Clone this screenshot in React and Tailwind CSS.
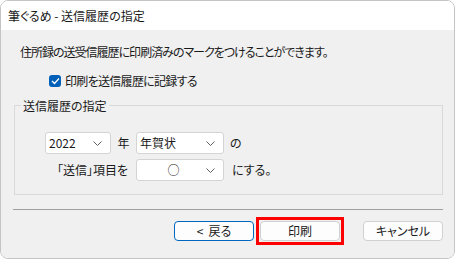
import React from "react";

function Chevron() {
  return (
    <svg width="9" height="5" viewBox="0 0 9 5" className="shrink-0">
      <polyline points="0.5,0.5 4.5,4.5 8.5,0.5" fill="none" stroke="#606060" strokeWidth="1" />
    </svg>
  );
}

function Select({ value, width, center }) {
  return (
    <div
      className="h-[22px] flex items-center bg-white border border-[#d4d4d4] rounded-[3px] pr-[8px]"
      style={{ width }}
    >
      <span className={center ? "flex-1 text-center pl-[4px]" : "flex-1 pl-[3px]"}>{value}</span>
      <Chevron />
    </div>
  );
}

function Button({ children, primary }) {
  return (
    <div
      className={
        "w-[80px] h-[20px] flex items-center justify-center bg-[#fdfdfd] rounded-[4px] " +
        (primary ? "border border-[#0067c0]" : "border border-[#d0d0d0]")
      }
    >
      {children}
    </div>
  );
}

export default function App() {
  return (
    <div className="w-[455px] h-[259px] flex flex-col border border-[#c4c4c4] rounded-[8px] overflow-hidden text-[12px] leading-[16px] text-[#1a1a1a] font-['Noto_Sans_CJK_JP','Noto_Sans',sans-serif] [font-feature-settings:'palt']">
      {/* タイトルバー */}
      <div className="h-[29px] shrink-0 bg-white flex items-center pl-[7px]">
        筆ぐるめ - 送信履歴の指定
      </div>

      <div className="flex-1 bg-[#f0f0f0] flex flex-col">
        <p className="mt-[14px] ml-[19px] tracking-[-1px]">
          住所録の送受信履歴に印刷済みのマークをつけることができます。
        </p>

        <div className="mt-[14px] ml-[48px] flex items-center h-[14px]">
          <div className="w-[12px] h-[12px] rounded-[3px] bg-[#005fb8] flex items-center justify-center">
            <svg width="9" height="8" viewBox="0 0 9 8">
              <polyline points="1,4 3.5,6.5 8,1.5" fill="none" stroke="white" strokeWidth="1.3" />
            </svg>
          </div>
          <span className="ml-[4px] tracking-[-0.7px]">印刷を送信履歴に記録する</span>
        </div>

        {/* グループボックス */}
        <div className="relative mt-[17px] ml-[13px] w-[429px] h-[90px] border border-[#d9d9d9]">
          <span className="absolute left-[6px] -top-[8px] px-[2px] bg-[#f0f0f0]">送信履歴の指定</span>
          <div className="mt-[26px] ml-[30px] grid grid-cols-[91px_88px_auto] gap-y-[5px] items-center">
            <div className="flex items-center">
              <Select value="2022" width={66} />
              <span className="flex-1 text-center">年</span>
            </div>
            <Select value="年賀状" width={88} />
            <span className="ml-[6px]">の</span>

            <span className="text-right pr-[8px]">「送信」項目を</span>
            <Select value="○" width={88} center />
            <span className="ml-[8px]">にする。</span>
          </div>
        </div>

        <div className="mt-[14px] ml-[12px] w-[430px] border-t border-[#a0a0a0]" />

        <div className="mt-[11px] ml-[173px] flex items-center">
          <Button primary>
            <span className="mr-[5px]">&lt;</span>戻る
          </Button>
          <div className="ml-[2px] border-[3px] border-[#ff0000] p-[1px] -my-[4px]">
            <Button>印刷</Button>
          </div>
          <div className="ml-[19px]">
            <Button>キャンセル</Button>
          </div>
        </div>
      </div>
    </div>
  );
}
